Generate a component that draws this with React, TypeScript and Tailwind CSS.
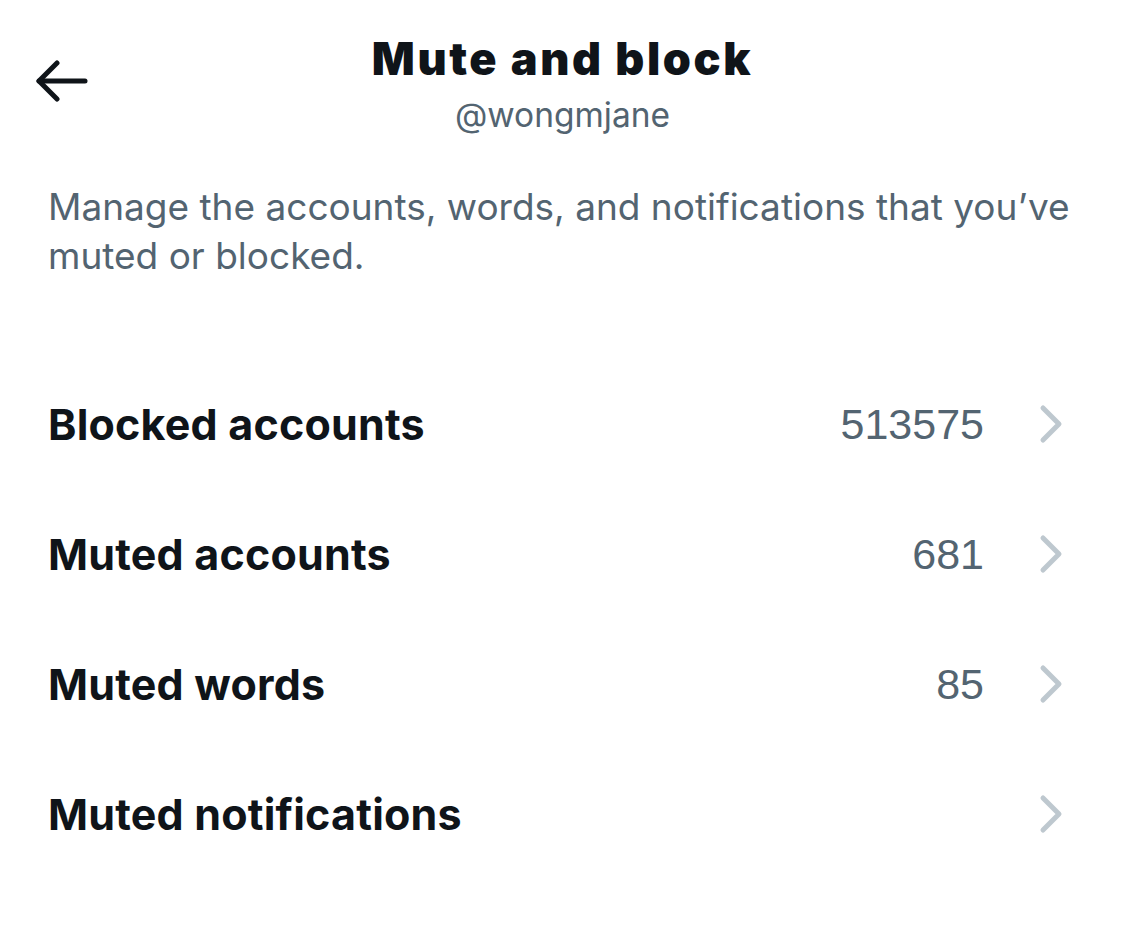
const rows = [
  { label: "Blocked accounts", count: "513575" },
  { label: "Muted accounts", count: "681" },
  { label: "Muted words", count: "85" },
  { label: "Muted notifications", count: "" },
];

function BackArrow() {
  return (
    <svg viewBox="0 0 52 42" className="h-[42px] w-[52px]" fill="none" stroke="#0f1419" strokeWidth="5" strokeLinecap="round" strokeLinejoin="round">
      <path d="M3 21h46" />
      <path d="M21 3L3 21l18 18" />
    </svg>
  );
}

function Chevron() {
  return (
    <svg viewBox="0 0 24 40" className="h-[40px] w-[24px]" fill="none" stroke="#bec8cf" strokeWidth="5" strokeLinecap="round" strokeLinejoin="round">
      <path d="M4 4l16 16L4 36" />
    </svg>
  );
}

export default function App() {
  return (
    <div className="h-[929px] w-[1125px] bg-white font-['Inter',sans-serif] text-[#0f1419]">
      <header className="relative flex flex-col items-center pt-[28px]">
        <button className="absolute left-[36px] top-[60px]">
          <BackArrow />
        </button>
        <h1 className="text-[45px] font-black leading-[62px] tracking-[2.6px]">Mute and block</h1>
        <p className="text-[33.5px] leading-[50px] text-[#536471]">@wongmjane</p>
      </header>

      <p className="mt-[42px] px-[48px] text-[37px] leading-[49px] text-[#536471]">
        Manage the accounts, words, and notifications that you’ve muted or blocked.
      </p>

      <div className="mt-[79px]">
        {rows.map((row) => (
          <div key={row.label} className="flex h-[130px] items-center pl-[48px] pr-[62px]">
            <span className="flex-1 text-[43px] font-bold tracking-[0.2px]">{row.label}</span>
            <span className="font-['Liberation_Sans',sans-serif] text-[43px] text-[#536471]">{row.count}</span>
            <span className="ml-[55px]">
              <Chevron />
            </span>
          </div>
        ))}
      </div>
    </div>
  );
}
